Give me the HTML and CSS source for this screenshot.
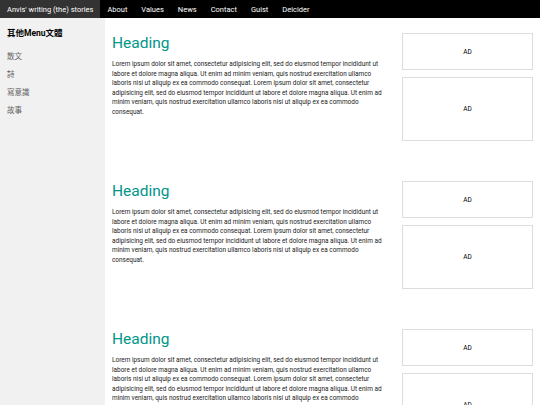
FILE: index.html
```html
<!DOCTYPE html>
<html>
<head>
<meta charset="utf-8">
<link rel="stylesheet" href="styles.css">
</head>
<body>
<nav class="topbar">
  <a class="nav-item brand">Anvis' writing (the) stories</a>
  <a class="nav-item">About</a>
  <a class="nav-item">Values</a>
  <a class="nav-item">News</a>
  <a class="nav-item">Contact</a>
  <a class="nav-item">Guist</a>
  <a class="nav-item">Deicider</a>
</nav>
<div class="layout">
  <aside class="sidebar">
    <h4 class="side-title">其他Menu文體</h4>
    <a class="side-item">散文</a>
    <a class="side-item">詩</a>
    <a class="side-item">寫意識</a>
    <a class="side-item">故事</a>
  </aside>
  <main class="main">
    <section class="row">
      <div class="text-col">
        <h1 class="heading">Heading</h1>
        <p class="para">Lorem ipsum dolor sit amet, consectetur adipisicing elit, sed do eiusmod tempor incididunt ut labore et dolore magna aliqua. Ut enim ad minim veniam, quis nostrud exercitation ullamco laboris nisi ut aliquip ex ea commodo consequat. Lorem ipsum dolor sit amet, consectetur adipisicing elit, sed do eiusmod tempor incididunt ut labore et dolore magna aliqua. Ut enim ad minim veniam, quis nostrud exercitation ullamco laboris nisi ut aliquip ex ea commodo consequat.</p>
      </div>
      <div class="ad-col">
        <div class="ad short">AD</div>
        <div class="ad tall">AD</div>
      </div>
    </section>
    <section class="row">
      <div class="text-col">
        <h1 class="heading">Heading</h1>
        <p class="para">Lorem ipsum dolor sit amet, consectetur adipisicing elit, sed do eiusmod tempor incididunt ut labore et dolore magna aliqua. Ut enim ad minim veniam, quis nostrud exercitation ullamco laboris nisi ut aliquip ex ea commodo consequat. Lorem ipsum dolor sit amet, consectetur adipisicing elit, sed do eiusmod tempor incididunt ut labore et dolore magna aliqua. Ut enim ad minim veniam, quis nostrud exercitation ullamco laboris nisi ut aliquip ex ea commodo consequat.</p>
      </div>
      <div class="ad-col">
        <div class="ad short">AD</div>
        <div class="ad tall">AD</div>
      </div>
    </section>
    <section class="row">
      <div class="text-col">
        <h1 class="heading">Heading</h1>
        <p class="para">Lorem ipsum dolor sit amet, consectetur adipisicing elit, sed do eiusmod tempor incididunt ut labore et dolore magna aliqua. Ut enim ad minim veniam, quis nostrud exercitation ullamco laboris nisi ut aliquip ex ea commodo consequat. Lorem ipsum dolor sit amet, consectetur adipisicing elit, sed do eiusmod tempor incididunt ut labore et dolore magna aliqua. Ut enim ad minim veniam, quis nostrud exercitation ullamco laboris nisi ut aliquip ex ea commodo consequat.</p>
      </div>
      <div class="ad-col">
        <div class="ad short">AD</div>
        <div class="ad tall">AD</div>
      </div>
    </section>
  </main>
</div>
</body>
</html>
```
FILE: styles.css
```css
html, body {
  margin: 0;
  padding: 0;
}
body {
  font-family: Roboto, "Noto Sans CJK TC", sans-serif;
  color: #000;
  background: #fff;
  height: 405px;
  overflow: hidden;
}
.topbar {
  display: flex;
  height: 18px;
  background: #000;
  align-items: stretch;
}
.nav-item {
  display: flex;
  align-items: center;
  padding: 0 7px;
  color: #fff;
  font-size: 7.5px;
}
.brand {
  background: #333;
}
.layout {
  display: flex;
  height: 387px;
}
.sidebar {
  width: 105px;
  flex: none;
  background: #f1f1f1;
  display: flex;
  flex-direction: column;
  padding-top: 9px;
  box-sizing: border-box;
}
.side-title {
  margin: 0 0 9px 0;
  padding: 0 7px;
  font-size: 8.5px;
  font-weight: 700;
  line-height: 12px;
}
.side-item {
  padding: 0 7px;
  font-size: 7.5px;
  line-height: 18px;
  color: #666;
}
.main {
  flex: 1;
  display: flex;
  flex-direction: column;
  gap: 40px;
  padding: 15px 7px 0 7px;
  min-width: 0;
}
.row {
  display: flex;
  gap: 16px;
}
.text-col {
  flex: 1;
  min-width: 0;
}
.heading {
  margin: 1px 0 0 0;
  font-size: 15.5px;
  font-weight: 400;
  line-height: 18px;
  color: #009688;
}
.para {
  margin: 8px 0 0 0;
  font-size: 6.45px;
  line-height: 9.5px;
  color: #222;
}
.ad-col {
  width: 131px;
  flex: none;
  display: flex;
  flex-direction: column;
  gap: 7px;
}
.ad {
  border: 1px solid #ddd;
  display: flex;
  align-items: center;
  justify-content: center;
  font-size: 6.5px;
  box-sizing: border-box;
}
.short {
  height: 37px;
}
.tall {
  height: 64px;
}
```
